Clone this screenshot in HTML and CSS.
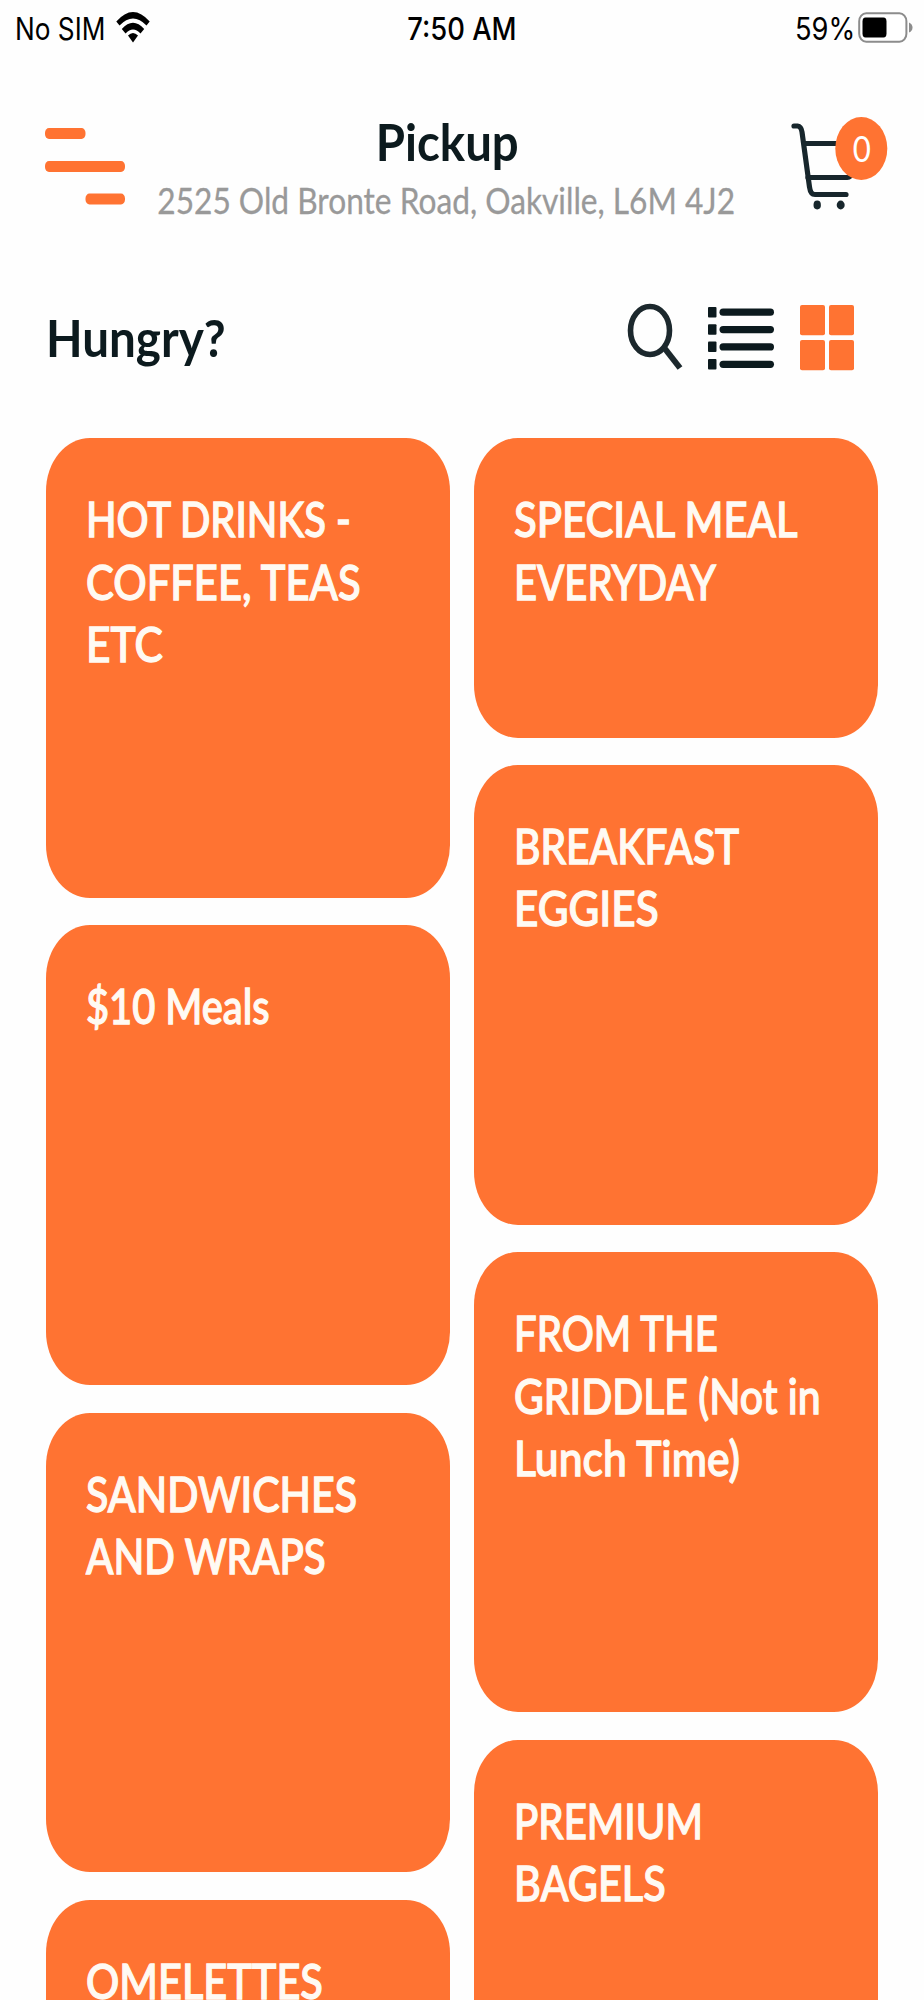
FILE: index.html
```html
<!DOCTYPE html>
<html lang="en">
<head>
<meta charset="utf-8">
<title>Pickup</title>
<link rel="stylesheet" href="styles.css">
</head>
<body>
<div class="status">
  <div class="status-left">
    <span class="line" data-ink="87">No SIM</span>
  </div>
  <svg class="wifi" width="34" height="32" viewBox="0 0 34 32">
    <path d="M0.300 9.500Q17-9.500 33.700 9.500L30.500 13.500Q17-0.500 3.500 13.500Z"/>
    <path d="M5.800 17Q17 4.500 28.200 17L24.500 21.500Q17 13.500 9.500 21.500Z"/>
    <path d="M12 23.500Q17 18.500 22 23.500L17 30.500Z"/>
  </svg>
  <div class="status-time"><span class="line centered" data-ink="106.500">7:50 AM</span></div>
  <div class="status-right"><span class="line" data-ink="55.500">59%</span></div>
  <svg class="battery" width="56" height="32" viewBox="0 0 56 32">
    <rect x="1.200" y="1.200" width="47.200" height="28.600" rx="7" ry="8" fill="#fff" stroke="#8c8c8c" stroke-width="2"/>
    <rect x="4.500" y="5.500" width="24" height="20" rx="3" ry="4"/>
    <path d="M51 10.500Q54.500 12 54.500 15.500T51 20.500Z" fill="#8c8c8c"/>
  </svg>
</div>

<header class="header">
  <svg class="menu" width="82" height="78" viewBox="0 0 82 78" fill="#ff7332">
    <rect x="0" y="0" width="40.500" height="11" rx="4" ry="5"/>
    <rect x="0" y="33" width="80" height="11" rx="4" ry="5"/>
    <rect x="40.500" y="65.500" width="39.500" height="11" rx="4" ry="5"/>
  </svg>
  <div class="place">
    <h1 class="heading"><span class="line centered" data-ink="137.700">Pickup</span></h1>
    <p class="address"><span class="line centered" data-ink="576">2525 Old Bronte Road, Oakville, L6M 4J2</span></p>
  </div>
  <div class="cart">
    <svg width="96" height="94" viewBox="0 0 96 94" fill="none" stroke="#17262c" stroke-width="5.200" stroke-linecap="round">
      <path d="M4 9H7.500Q11.200 9.500 12 15L19.500 70Q20.500 77.500 25 77.500H56"/>
      <path d="M14.500 26.500H60M18 60.500H57Q61 60 63 55"/>
      <g fill="#17262c" stroke="none"><ellipse cx="27.200" cy="88" rx="3.700" ry="4.400"/><ellipse cx="50.700" cy="88" rx="4" ry="4.400"/></g>
    </svg>
    <div class="badge"><span class="line centered" data-ink="16.500">0</span></div>
  </div>
</header>

<div class="toolbar">
  <h2 class="heading"><span class="line" data-ink="175">Hungry?</span></h2>
  <svg width="57" height="68" viewBox="0 0 57 68" fill="none" stroke="#1c282d" stroke-width="5.600">
    <ellipse cx="23" cy="27.500" rx="19.500" ry="24"/>
    <path d="M37 44.500L53 65" stroke-width="6"/>
  </svg>
  <svg class="list-icon" width="67" height="63" viewBox="0 0 67 63" fill="#0c1a1e">
    <rect x="0" y="0" width="8.500" height="10.500" rx="1"/><rect x="11.500" y="1.600" width="54.500" height="7.200" rx="3.600"/>
    <rect x="0" y="17.300" width="8.500" height="10.500" rx="1"/><rect x="11.500" y="19" width="54.500" height="7.200" rx="3.600"/>
    <rect x="0" y="34.600" width="8.500" height="10.500" rx="1"/><rect x="11.500" y="36.300" width="54.500" height="7.200" rx="3.600"/>
    <rect x="0" y="52" width="8.500" height="10.500" rx="1"/><rect x="11.500" y="53.700" width="54.500" height="7.200" rx="3.600"/>
  </svg>
  <svg class="grid-icon" width="54" height="66" viewBox="0 0 54 66" fill="#ff7332">
    <rect x="0" y="0" width="25" height="30.300" rx="2"/><rect x="29" y="0" width="25" height="30.300" rx="2"/>
    <rect x="0" y="35" width="25" height="30.300" rx="2"/><rect x="29" y="35" width="25" height="30.300" rx="2"/>
  </svg>
</div>

<main class="menu-grid">
  <div class="column">
    <section class="card"><span class="line" data-ink="261">HOT DRINKS -</span><span class="line" data-ink="273">COFFEE, TEAS</span><span class="line" data-ink="73">ETC</span></section>
    <section class="card"><span class="line" data-ink="181">$10 Meals</span></section>
    <section class="card"><span class="line" data-ink="269">SANDWICHES</span><span class="line" data-ink="239">AND WRAPS</span></section>
    <section class="card"><span class="line" data-ink="234">OMELETTES</span></section>
  </div>
  <div class="column">
    <section class="card short"><span class="line" data-ink="284">SPECIAL MEAL</span><span class="line" data-ink="199">EVERYDAY</span></section>
    <section class="card"><span class="line" data-ink="222">BREAKFAST</span><span class="line" data-ink="140">EGGIES</span></section>
    <section class="card"><span class="line" data-ink="200">FROM THE</span><span class="line" data-ink="303">GRIDDLE (Not in</span><span class="line" data-ink="222">Lunch Time)</span></section>
    <section class="card"><span class="line" data-ink="182">PREMIUM</span><span class="line" data-ink="147">BAGELS</span></section>
  </div>
</main>
<script src="fit.js"></script>
</body>
</html>
```
FILE: styles.css
```css
* { box-sizing: border-box; }
body {
  margin: 0;
  width: 924px;
  height: 2000px;
  overflow: hidden;
  background: #fefefe;
  color: #0c1a1e;
  font-family: Lato, "Open Sans", sans-serif;
}
h1, h2, p { margin: 0; }
svg { display: block; flex: none; }

/* One line of condensed text; fit.js sets its horizontal scale. */
.line {
  display: block;
  width: max-content;
  white-space: nowrap;
  transform-origin: 0 50%;
}
.line.centered { transform-origin: 50% 50%; }

.status {
  display: grid;
  grid-template-columns: 101px 195.500px 300px 183px 63px 56px;
  height: 58px;
  padding: 9px 0 0 15px;
  font: 400 31px/40px Inter, sans-serif;
  color: #000;
}
.status-left { grid-column: 1; }
.wifi { grid-column: 2; margin-top: 3px; }
.status-time { grid-column: 3; display: flex; justify-content: center; font-weight: 500; }
.status-right { grid-column: 5; }
.battery { grid-column: 6; margin-top: 3.200px; }

.header {
  display: flex;
  height: 238px;
  padding: 53.200px 34px 0 45px;
}
.menu { margin-top: 16.800px; }
.place {
  flex: none;
  width: 638px;
  display: flex;
  flex-direction: column;
  align-items: center;
  gap: 9px;
}
.heading { font-size: 52.500px; font-weight: 700; line-height: 60px; }
.place .heading { padding-left: 2px; }
.address { font-size: 36.300px; line-height: 40px; color: #999; -webkit-text-stroke: 0.300px #999; }
.cart { position: relative; width: 96px; margin: 5.800px 0 0 25px; }
.badge {
  position: absolute;
  left: 46px;
  top: 0;
  width: 52px;
  height: 63px;
  border-radius: 50%;
  background: #ff7332;
  color: #fff;
  display: flex;
  justify-content: center;
  font-size: 36px;
  line-height: 62px;
  transform: translateX(-0.700px);
}

.toolbar {
  display: flex;
  height: 142.300px;
  padding: 7px 70px 0 46px;
}
.toolbar .heading { width: 581.500px; padding-top: 4.200px; }
.list-icon { margin: 4px 0 0 24.500px; }
.grid-icon { margin: 2px 0 0 25px; }

.menu-grid {
  display: flex;
  gap: 24px;
  height: 1561.700px;
  padding: 0 46.300px;
  overflow: hidden;
}
.column { display: flex; flex-direction: column; gap: 27.400px; width: 403.700px; height: 100%; overflow: hidden; }
.card {
  height: 459.800px;
  flex: none;
  padding: 49px 0 0 40px;
  border-radius: 44px / 53px;
  background: #ff7332;
  color: #fffaf3;
  font-size: 48.600px;
  font-weight: 500;
  line-height: 62.200px;
  -webkit-text-stroke: 1.300px #fffaf3;
}
.card.short { height: 299.500px; }
/* The last row runs on to the bottom of the screen. */
.card:last-child { flex: 1; height: auto; min-height: 0; border-radius: 44px 44px 0 0 / 53px 53px 0 0; }
```
FILE: fit.js
```js
// Scales each line horizontally so that its ink is data-ink pixels wide.
const pen = document.createElement("canvas").getContext("2d");
document.querySelectorAll(".line").forEach((line) => {
  const style = getComputedStyle(line);
  pen.font = `${style.fontWeight} ${style.fontSize} ${style.fontFamily}`;
  const box = pen.measureText(line.textContent);
  const ink = box.actualBoundingBoxLeft + box.actualBoundingBoxRight;
  line.style.transform = `scaleX(${Number(line.dataset.ink) / ink})`;
});
```
